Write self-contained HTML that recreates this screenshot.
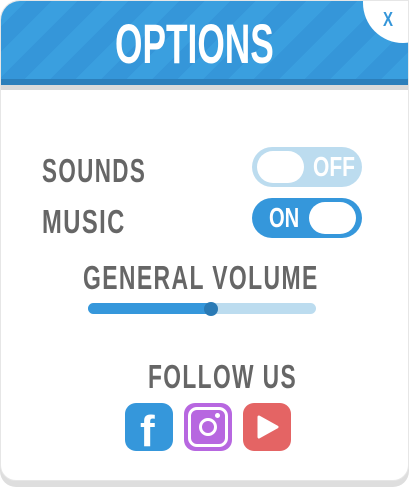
<!DOCTYPE html>
<html><head><meta charset="utf-8"><style>
html,body{margin:0;padding:0;background:#fff;width:410px;height:488px;overflow:hidden;position:relative}
.f{font-family:"Liberation Sans",sans-serif;font-weight:bold;position:absolute;white-space:nowrap;line-height:1;transform-origin:left top}
.panel{position:absolute;left:0;top:0;width:409px;height:481px;background:#fff;border-radius:20px 0 16px 16px;box-shadow:0 6px 0 #dedede;border:1px solid #e6e6e6;box-sizing:border-box;overflow:hidden}
.hdr{position:absolute;left:0;top:0;width:409px;height:78px;background:repeating-linear-gradient(135deg,#3a9fdf 0 18px,#3596d9 18px 36px)}
.dk{position:absolute;left:0;top:78px;width:409px;height:6px;background:#2c7fbb}
.gr{position:absolute;left:0;top:84px;width:409px;height:5px;background:#dadada}
.circ{position:absolute;left:362px;top:-38px;width:80px;height:80px;border-radius:50%;background:#fff}
.lbl{color:#666;font-size:33px;letter-spacing:2px;transform:scaleX(.68)}
.tg{position:absolute;width:110px;height:40px;border-radius:20px}
.kn{position:absolute;width:47px;height:32px;border-radius:16px;background:#fff;top:4px}
.ic{position:absolute;top:402px;width:48px;height:48px;border-radius:11px}
</style></head><body>
<div class="panel">
<div class="hdr"></div><div class="dk"></div><div class="gr"></div>
<div class="circ"></div>
<div class="f" style="left:114px;top:15px;font-size:56px;color:#fff;transform:scaleX(.63)">OPTIONS</div>
<div class="f" style="left:382px;top:9px;font-size:20px;color:#3596d9;transform:scaleX(.75)">X</div>
<div class="f lbl" style="left:41px;top:153px">SOUNDS</div>
<div class="f lbl" style="left:41px;top:204px;transform:scaleX(.72)">MUSIC</div>
<div class="tg" style="left:251px;top:146px;background:#bcdcef"><div class="kn" style="left:5px"></div><div class="f" style="left:61px;top:6px;font-size:28px;color:#fff;transform:scaleX(.75)">OFF</div></div>
<div class="tg" style="left:251px;top:197px;background:#3597db"><div class="f" style="left:17px;top:6px;font-size:28px;color:#fff;transform:scaleX(.72)">ON</div><div class="kn" style="left:57px"></div></div>
<div class="f lbl" style="left:82px;top:260px;transform:scaleX(.695)">GENERAL VOLUME</div>
<div style="position:absolute;left:87px;top:302px;width:228px;height:11px;border-radius:6px;background:#bcdcef"></div>
<div style="position:absolute;left:87px;top:302px;width:123px;height:11px;border-radius:6px 0 0 6px;background:#3597db"></div>
<div style="position:absolute;left:203px;top:301px;width:14px;height:14px;border-radius:50%;background:#2a7ab5"></div>
<div class="f lbl" style="left:147px;top:359px;transform:scaleX(.69)">FOLLOW US</div>
<div class="ic" style="left:124px;background:#3597db"><div class="f" style="left:15px;top:7px;font-size:44px;color:#fff">f</div></div>
<div class="ic" style="left:183px;background:#b767e0"><div style="position:absolute;left:4px;top:4px;width:34px;height:34px;border:3px solid #fff;border-radius:9px"></div><div style="position:absolute;left:15px;top:15px;width:12px;height:12px;border:3px solid #fff;border-radius:50%"></div><div style="position:absolute;left:31px;top:10px;width:5px;height:5px;background:#fff;border-radius:50%"></div></div>
<div class="ic" style="left:242px;background:#e46464"><svg width="48" height="48"><path d="M16 14 L34 24 L16 34 Z" fill="#fff" stroke="#fff" stroke-width="3" stroke-linejoin="round"/></svg></div>
</div>
</body></html>
